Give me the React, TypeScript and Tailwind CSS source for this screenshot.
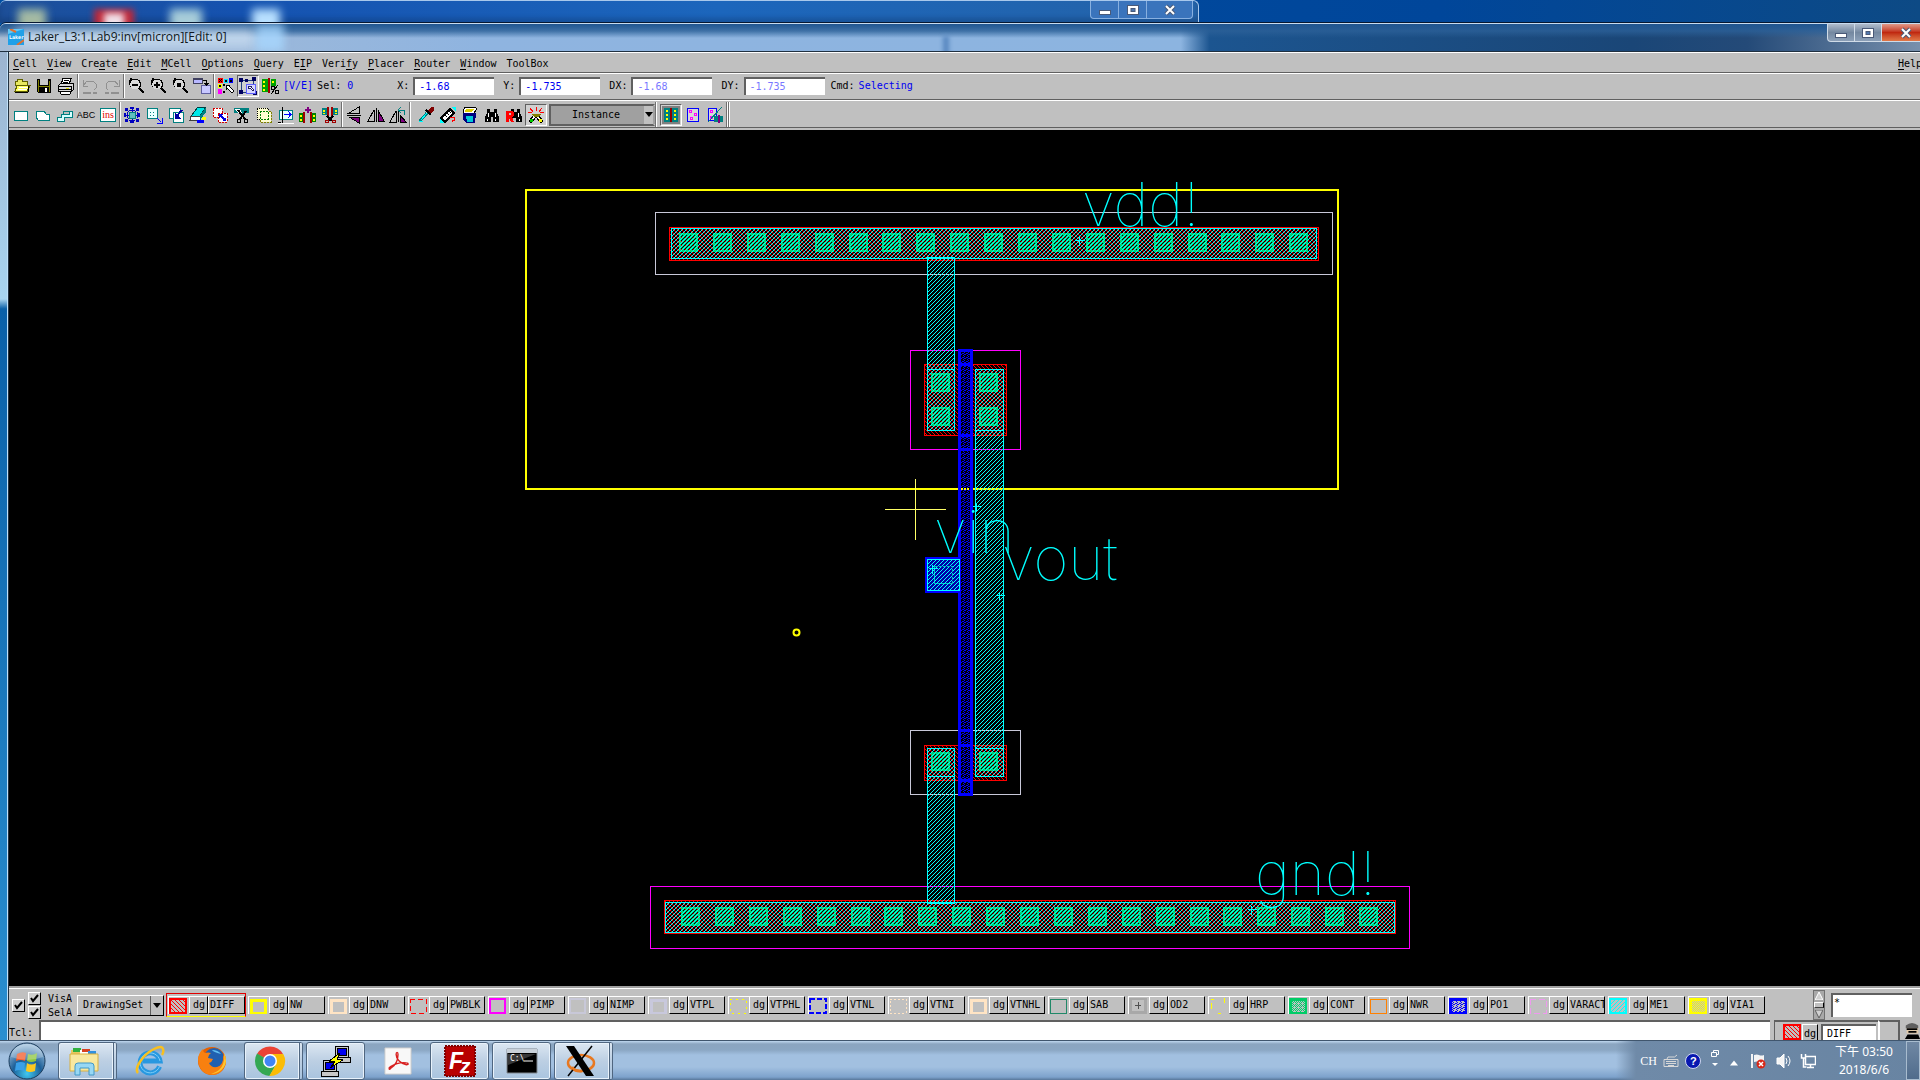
import React from "react";

type Kids = { children?: React.ReactNode };

/* ---------- toolbar icons ---------- */

function Ico({ children }: Kids) {
  return (
    <svg viewBox="0 0 18 18" className="h-[18px] w-[18px] shrink-0" shapeRendering="crispEdges" fill="none" aria-hidden="true">
      {children}
    </svg>
  );
}

function Tool({ label, on, children }: Kids & { label: string; on?: boolean }) {
  return (
    <button
      type="button"
      aria-label={label}
      className={
        on
          ? "flex h-[22px] w-[22px] shrink-0 items-center justify-center border border-t-[#606060] border-l-[#606060] border-r-white border-b-white bg-[#d0d0d0]"
          : "flex h-[22px] w-[22px] shrink-0 items-center justify-center"
      }
    >
      <Ico>{children}</Ico>
    </button>
  );
}

const Sep = () => <span className="h-[25px] w-[2px] shrink-0 border-r border-l border-l-[#707070] border-r-white" />;

const Lens = ({ children }: Kids) => (
  <>
    <path d="M5 2h6v1h2v2h1v5h-1v1h1v1h1v1h1v1h1v2h-2v-1h-1v-1h-1v-1h-1v-1h-1v-1h-6v-1h-2v-2h-1v-5h1v-2h1z" fill="#000" />
    <path d="M5 3h6v1h1v2h1v3h-1v2h-1v1h-6v-1h-1v-2h-1v-3h1v-2h1z" fill="#d8d8d8" />
    {children}
  </>
);

const icons: Record<string, React.ReactNode> = {
  open: (
    <>
      <path d="M2 4h2v-2h5v2h5v4h-12z" fill="#e8e860" stroke="#606000" />
      <path d="M4 8.500h13l-3 6h-12z" fill="#ffff60" stroke="#606000" />
      <path d="M6 10h9M5 12h9" stroke="#fff" />
      <path d="M15.500 9v6M2 15.500h13" stroke="#000" />
    </>
  ),
  save: (
    <>
      <path d="M2 2h14v14h-13l-1-1z" fill="#000" />
      <path d="M3 3h1v12h-1zM14 4h1v11h-1zM4 9h10v1h-10z" fill="#808000" />
      <path d="M5 2h8v6h-8z" fill="#c8c8c8" />
      <path d="M10 11h2v4h-2z" fill="#fff" />
    </>
  ),
  print: (
    <>
      <path d="M6 1.500h8l-2 6h-8z" fill="#fff" stroke="#000" />
      <path d="M7 3.500h5M6 5.500h5" stroke="#000" />
      <path d="M1.500 8.500l2-2h13v6l-2 2h-13z" fill="#d8d8d8" stroke="#000" />
      <path d="M2 9.500h12M2 12.500h12M14.500 9v5" stroke="#000" />
      <path d="M3 14h11l-1 3h-9z" fill="#fff" stroke="#000" />
      <path d="M9 11h3v1h-3z" fill="#e0e000" />
    </>
  ),
  undo: (
    <>
      <path d="M4 9h-2v-6M2 9h5M3 8l3-4h6l3 3v4l-2 2" stroke="#909090" />
      <path d="M2 15.500h8M12 15.500h4" stroke="#909090" strokeWidth="2" />
    </>
  ),
  redo: (
    <>
      <path d="M14 9h2v-6M16 9h-5M15 8l-3-4h-6l-3 3v4l2 2" stroke="#909090" />
      <path d="M16 15.500h-8M6 15.500h-4" stroke="#909090" strokeWidth="2" />
    </>
  ),
  zoomOut: <Lens><path d="M5 7h6v2h-6z" fill="#000" /></Lens>,
  zoomIn: <Lens><path d="M5 7h6v2h-6zM7 5h2v6h-2z" fill="#000" /></Lens>,
  zoomFit: <Lens><path d="M6 6h4v4h-4z" fill="#000" /></Lens>,
  windows: (
    <>
      <path d="M0 1h9v5h-9z" fill="#b8b8ff" stroke="#404060" />
      <path d="M0 1h9v2h-9z" fill="#404060" />
      <path d="M8 8h9v8h-9z" fill="#c8c8ff" stroke="#6060a0" />
      <path d="M10 3h4v3h2l-2.500 3-2.500-3h2v-2h-3z" fill="#000" />
    </>
  ),
  palette: (
    <>
      <path d="M1 1h5v5h-5z" fill="#f00" />
      <path d="M2 2l3 3M5 2l-3 3" stroke="#000" />
      <path d="M7 2h4v4h-4z" fill="#00d8ff" />
      <path d="M12 1h4v5h-4z" fill="#00f" />
      <path d="M1 7h4v4h-4z" fill="#ff0" />
      <path d="M1 12h4v5h-4z" fill="#f0f" />
      <path d="M2 8h2v2h-2zM8 3h2v2h-2zM13 3h2v2h-2zM6 7h2v2h-2zM6 14h2v2h-2z" fill="#000" />
      <path d="M9 8h4l-1 1 5 5-2 2-5-5-1 2z" fill="#fff" stroke="#000" />
    </>
  ),
  select: (
    <>
      <path d="M2 3h12M2 3v12M2 15h5M14 3v4" stroke="#204080" />
      <path d="M0 1h4v4h-4zM13 0h4v4h-4zM0 13h4v4h-4zM14 14h4v4h-4zM6 2h3v3h-3z" fill="#000060" />
      <path d="M7 7h9v9h-9z" stroke="#6060ff" fill="#d8d8ff" />
      <path d="M9 9h4l-1 1 3 3-1 1-3-3-2 1z" fill="#fff" stroke="#202060" />
    </>
  ),
  layerSel: (
    <>
      <path d="M1 2h6v13h-6zM10 2h5v7h-5z" fill="#00a000" />
      <path d="M2 4h2v2h-2zM2 8h2v2h-2zM2 12h2v2h-2zM11 4h2v2h-2z" fill="#ff0" />
      <path d="M7 1h2v15h-2z" fill="#a00000" />
      <path d="M10 9h3v3h-3zM14 13h3v3h-3z" stroke="#000" />
      <path d="M10 17l7-9" stroke="#000" />
    </>
  ),
  rect: <path d="M3 5h13v9h-13z" fill="#fff" stroke="#008080" />,
  poly: <path d="M3 5h8l2 3h3v6h-11l-2-3z" fill="#fff" stroke="#008080" />,
  path: <path d="M8 5h9v6h-8v4h-7v-4h4v-3h8v-3M8 5v3" fill="#d8ffff" stroke="#008080" />,
  move: (
    <>
      <path d="M9 1v16M1 9h16M3 3l12 12M15 3l-12 12M6 4h6M6 14h6M4 6v6M14 6v6" stroke="#0000c0" />
      <path d="M6 6h6v6h-6z" fill="#60c0c0" stroke="#008080" />
      <path d="M7 1h4v2h-4zM7 15h4v2h-4zM1 7h2v4h-2zM15 7h2v4h-2zM2 2h3v3h-3zM13 2h3v3h-3zM2 13h3v3h-3zM13 13h3v3h-3z" fill="#0000c0" />
    </>
  ),
  stretch: (
    <>
      <path d="M2 2h10v10h-10z" fill="#e8ffff" stroke="#008080" />
      <path d="M5 6h1v1h-1zM8 6h1v1h-1zM5 9h1v1h-1zM8 9h1v1h-1z" fill="#008080" />
      <path d="M12 12l4 4M17 12v5h-5" stroke="#00f" />
    </>
  ),
  copy: (
    <>
      <path d="M2 2h11v10h-11z" fill="#fff" stroke="#008080" />
      <path d="M6 6h10v10h-10z" fill="#fff" stroke="#008080" />
      <path d="M15 4l-6 7" stroke="#0000a0" strokeWidth="2" />
      <path d="M8 7v6h6z" fill="#0000a0" />
    </>
  ),
  erase: (
    <>
      <path d="M9 1h8l-6 9h-9z" fill="#00e8e8" stroke="#004040" />
      <path d="M2 10h9v4h-10z" fill="#fff" stroke="#404040" />
      <path d="M17 1v5l-6 8v-4z" fill="#008080" />
      <path d="M8 14h7v3h-7z" fill="#00f" />
      <path d="M13 11h4v3h-4z" fill="#ff0" />
    </>
  ),
  moveBy: (
    <>
      <path d="M2 2h9v9h-9z" fill="#fff" stroke="#d00000" strokeDasharray="2 1" />
      <path d="M7 7h9v9h-9z" fill="#fff" stroke="#d00000" strokeDasharray="2 1" />
      <path d="M9 9l5 5" stroke="#0000e0" strokeWidth="2" />
      <path d="M8 8h4l-4 4zM15 11v4h-4z" fill="#0000e0" />
    </>
  ),
  cut: (
    <>
      <path d="M1 2h15v5h-4l-2 3-4-3h-5z" fill="#008080" />
      <path d="M2 3h5l2 4h-4z" fill="#fff" />
      <path d="M5 4l7 9M13 5l-6 8" stroke="#000" strokeWidth="2" />
      <path d="M4 13h3v3h-3zM11 13h3v3h-3z" stroke="#000" fill="#c0c0c0" />
    </>
  ),
  merge: (
    <>
      <path d="M2 2h11v11h-11z" fill="#ffffd0" stroke="#000" strokeDasharray="1 1" />
      <path d="M5 5h11v11h-11z" fill="#ffffd0" stroke="#808000" strokeDasharray="2 1" />
      <path d="M5 5h8v8h-8z" stroke="#008000" strokeDasharray="2 1" />
    </>
  ),
  align: (
    <>
      <path d="M2 4h13v9h-13z" fill="#e8ffff" stroke="#008080" />
      <path d="M5 1v17M1 16h3" stroke="#000" />
      <path d="M7 8.500h7M11 5l3 3.500-3 3.500" stroke="#00f" />
      <path d="M1 17.500h16" stroke="#fff" />
    </>
  ),
  pair: (
    <>
      <path d="M0 7h6v9h-6zM11 7h6v9h-6z" fill="#008000" />
      <path d="M1 9h2v2h-2zM1 13h2v2h-2zM14 9h2v2h-2zM14 13h2v2h-2z" fill="#ff0" />
      <path d="M4 6h2v11h-2zM11 6h2v11h-2z" fill="#a00000" />
      <path d="M8 1h2v2h2v2h-2v2h-2v-2h-2v-2h2z" fill="#800080" />
    </>
  ),
  split: (
    <>
      <path d="M1 2h6v7h-6zM11 2h6v7h-6z" fill="#008080" />
      <path d="M2 4h2v2h-2zM14 4h2v2h-2zM2 7h2v1h-2zM14 7h2v1h-2z" fill="#ff0" />
      <path d="M6 1h2v9h-2zM10 1h2v9h-2z" fill="#a00000" />
      <path d="M6 10l5 5M12 10l-5 5" stroke="#000" strokeWidth="2" />
      <path d="M4 14h3v2h-3zM11 14h3v2h-3z" stroke="#a00000" />
    </>
  ),
  flipV: (
    <>
      <path d="M14 1v6h-10z" fill="#c0c0c0" stroke="#000" />
      <path d="M2 9h14" stroke="#000" />
      <path d="M14 17v-6h-10z" fill="#800080" stroke="#000" />
    </>
  ),
  flipH: (
    <>
      <path d="M1 15h6v-11z" fill="#c0c0c0" stroke="#000" />
      <path d="M9 2v14" stroke="#000" />
      <path d="M17 15h-6v-11z" fill="#800080" stroke="#000" />
    </>
  ),
  rotate: (
    <>
      <path d="M1 16h6v-11z" fill="#c0c0c0" stroke="#000" />
      <path d="M9 3v13" stroke="#000" />
      <path d="M17 16h-6v-7z" fill="#800080" stroke="#000" />
      <path d="M10 4h5v5M12 1l-3 3 3 3" stroke="#008080" />
    </>
  ),
  dropper: (
    <>
      <path d="M14 1h3v3l-4 5-3-3z" fill="#800000" />
      <path d="M9 4l5 5" stroke="#000" strokeWidth="2" />
      <path d="M10 7l-7 8" stroke="#008080" strokeWidth="3" />
      <path d="M10 7l-6 7" stroke="#0ff" />
      <path d="M2 15h4v1h-4z" fill="#0ff" />
    </>
  ),
  ruler: (
    <>
      <path d="M12 1h5v5zM1 12v5h5z" fill="#0ff" />
      <path d="M2 12l9-9 4 4-9 9z" fill="#fff" stroke="#000" strokeWidth="2" />
      <path d="M6 9l2 2M8 7l2 2M10 5l2 2" stroke="#000" />
      <path d="M11 11h4v3h-2v2" stroke="#f00" />
    </>
  ),
  basket: (
    <>
      <path d="M4 1h10l2 2-4 5h-10v-3z" fill="#fff" stroke="#000" />
      <path d="M5 3h8l-2 3h-7z" fill="#e0d000" />
      <path d="M2 7h13l-1 10h-9l-3-3z" fill="#000080" />
      <path d="M5 10h7v6h-6z" fill="#00c8d8" />
    </>
  ),
  find: (
    <>
      <path d="M4 3h3v3h4v-3h3v4l2 4v5h-6v-5h-2v5h-6v-5l2-4z" fill="#000" />
      <path d="M5 7h1v4h-1zM12 7h1v4h-1zM4 13h1v2h-1zM12 13h1v2h-1z" fill="#fff" />
    </>
  ),
  findNext: (
    <>
      <path d="M6 3h3v3h3v-3h3v4l2 4v5h-6v-4h-5z" fill="#000" />
      <path d="M13 7h1v4h-1zM14 13h1v2h-1z" fill="#fff" />
      <path d="M1 5h6l2 2v3l-2 1 2 5h-3l-2-4v4h-3zM4 7v2h2v-2z" fill="#f00" fillRule="evenodd" />
    </>
  ),
  probe: (
    <>
      <path d="M9 1v4M3 2l3 4M15 2l-3 4M1 6l4 1M17 6l-4 1" stroke="#f00" />
      <path d="M2 15l5-6 2 2-5 6zM16 15l-5-6-2 2 5 6z" fill="#fff" stroke="#000" />
      <path d="M4 8h10l-3 3h-4z" fill="#808000" />
      <path d="M3 13h3v3h-3z" fill="#0c0" />
      <path d="M12 13h3v3h-3z" fill="#ff0" />
    </>
  ),
  viewFull: (
    <>
      <path d="M0 0h18v18h-18z" fill="#808080" />
      <path d="M2 2h14v14h-14z" fill="#008080" />
      <path d="M4 4h2v2h-2zM4 8h2v2h-2zM4 12h2v2h-2zM12 4h2v2h-2zM12 8h2v2h-2zM12 12h2v2h-2z" fill="#ff0" />
      <path d="M8 2h2v14h-2z" fill="#900000" />
    </>
  ),
  viewPins: (
    <>
      <path d="M3.500 2.500h11v13h-11z" fill="#d8d8d8" stroke="#00f" />
      <path d="M5.500 4.500h2v2h-2zM10.500 7.500h2v2h-2zM6.500 11.500h2v2h-2z" stroke="#f0f" />
    </>
  ),
  viewMix: (
    <>
      <path d="M2.500 2.500h8v12h-8z" fill="#d8d8d8" stroke="#00f" />
      <path d="M4.500 4.500h2v2h-2zM4.500 10.500h2v2h-2z" stroke="#f0f" />
      <path d="M8 10h9v6h-9z" fill="#008080" />
      <path d="M12 9h2v8h-2z" fill="#800080" />
      <path d="M16 1l-14 15" stroke="#008080" />
    </>
  ),
};

const menu: [string, number][] = [
  ["Cell", 0], ["View", 0], ["Create", 3], ["Edit", 0], ["MCell", 0], ["Options", 0], ["Query", 0],
  ["EIP", 1], ["Verify", 4], ["Placer", 0], ["Router", 0], ["Window", 0], ["ToolBox", -1],
];

function MenuItem({ text, at }: { text: string; at: number }) {
  if (at < 0) return <button type="button">{text}</button>;
  return (
    <button type="button" className="whitespace-nowrap">
      {text.slice(0, at)}
      <span className="border-b border-black">{text[at]}</span>
      {text.slice(at + 1)}
    </button>
  );
}

function Coord({ name, value, dim }: { name: string; value: string; dim?: boolean }) {
  return (
    <label className="flex items-center gap-1">
      <span>{name}:</span>
      <input
        readOnly
        defaultValue={value}
        className={
          dim
            ? "h-[18px] w-[81px] border-t-2 border-l-2 border-[#606060] bg-white pl-1 text-[#7878ff] outline-none"
            : "h-[18px] w-[81px] border-t-2 border-l-2 border-[#606060] bg-white pl-1 text-[#0000f0] outline-none"
        }
      />
    </label>
  );
}

/* ---------- layer palette ---------- */

const layers: [string, React.ReactNode][] = [
  ["DIFF", <rect x="1" y="1" width="16" height="14" fill="url(#pRed)" stroke="#f00" strokeWidth="2" />],
  ["NW", <rect x="2" y="2" width="14" height="13" stroke="#ff0" strokeWidth="3" />],
  ["DNW", <rect x="2" y="2" width="14" height="13" stroke="#ffe4c4" strokeWidth="3" />],
  ["PWBLK", <rect x="1" y="1" width="16" height="14" stroke="#f00" strokeWidth="1" strokeDasharray="5 3" />],
  ["PIMP", <rect x="1" y="1" width="15" height="14" stroke="#f0f" strokeWidth="2" />],
  ["NIMP", <rect x="1" y="1" width="15" height="14" stroke="#c8c8d8" strokeWidth="2" />],
  ["VTPL", <rect x="2" y="2" width="14" height="13" stroke="#c8c8dc" strokeWidth="3" />],
  ["VTPHL", <rect x="1" y="1" width="16" height="14" stroke="#ff0" strokeWidth="1" strokeDasharray="2 4" />],
  ["VTNL", <rect x="1" y="1" width="16" height="14" stroke="#00f" strokeWidth="2" strokeDasharray="5 2" />],
  ["VTNI", <rect x="1" y="1" width="16" height="14" stroke="#ffe4c4" strokeWidth="1" strokeDasharray="2 2" />],
  ["VTNHL", <rect x="2" y="2" width="14" height="13" stroke="#ffe4c4" strokeWidth="3" />],
  ["SAB", <rect x="1" y="1" width="16" height="14" stroke="#208868" strokeWidth="1" />],
  ["OD2", <><rect width="18" height="16" fill="#a8a8a8" /><rect x="3" y="2" width="12" height="11" fill="#c0c0c0" /><path d="M9 4v7M6 7h6" stroke="#505050" /></>],
  ["HRP", <path d="M2 5v6M2 1h3M15 0v5M9 15h3" stroke="#ff0" />],
  ["CONT", <rect x="1" y="1" width="16" height="14" fill="url(#pGreen)" stroke="#00cc66" strokeWidth="3" />],
  ["NWR", <rect x="1" y="1" width="16" height="14" stroke="#ff8000" strokeWidth="1" />],
  ["PO1", <rect x="1" y="1" width="16" height="14" fill="url(#pBlue)" stroke="#00f" strokeWidth="3" />],
  ["VARACT", <rect x="1" y="1" width="16" height="14" stroke="#ee99ee" strokeWidth="1" strokeDasharray="6 3" />],
  ["ME1", <rect x="1" y="1" width="16" height="14" fill="url(#pCyan)" stroke="#0ff" strokeWidth="2" />],
  ["VIA1", <rect x="1" y="1" width="16" height="14" fill="url(#pYellow)" stroke="#ff0" strokeWidth="3" />],
];

function Swatch({ children }: Kids) {
  return (
    <svg className="h-4 w-[18px] shrink-0" viewBox="0 0 18 16" fill="none" shapeRendering="crispEdges" aria-hidden="true">
      {children}
    </svg>
  );
}

const raised = "border border-t-white border-l-white border-b-black border-r-black";

function Layer({ name, art, on }: { name: string; art: React.ReactNode; on?: boolean }) {
  return (
    <div
      className={
        on
          ? "flex h-6 w-20 shrink-0 items-center border border-[#e00000] border-b-[#ff0] pl-px"
          : "flex h-6 w-20 shrink-0 items-center pl-[2px]"
      }
    >
      <button type="button" aria-label={name + " swatch"} className="flex h-[18px] w-[21px] shrink-0 items-center border-t border-l border-white">
        <Swatch>{art}</Swatch>
      </button>
      <button type="button" className={"flex h-[18px] w-[19px] shrink-0 items-center pl-[3px] " + raised}>dg</button>
      <button type="button" className={"flex h-[18px] w-[37px] shrink-0 items-center overflow-hidden pl-px " + raised}>{name}</button>
    </div>
  );
}

function Tick({ label }: { label: string }) {
  return (
    <span className="relative flex h-[13px] w-[13px]">
      <input
        type="checkbox"
        defaultChecked
        aria-label={label}
        className="h-[13px] w-[13px] shrink-0 appearance-none border border-t-white border-l-white border-r-black border-b-black bg-[#d0d0d0]"
      />
      <svg viewBox="0 0 13 13" className="pointer-events-none absolute inset-0" fill="none" stroke="#000" strokeWidth="2" aria-hidden="true">
        <path d="M3 6l2 3 5-6" />
      </svg>
    </span>
  );
}

/* ---------- layout drawing ---------- */

function Contact({ x, y }: { x: number; y: number }) {
  return <rect x={x + 1} y={y + 1} width={17} height={17} fill="url(#pGreen)" stroke="#00d070" strokeWidth={2} />;
}

const Cross = ({ x, y }: { x: number; y: number }) => (
  <path d={`M${x - 4} ${y}h9M${x} ${y - 4}v9`} stroke="#0ff" />
);

function Drawing() {
  const metal = { fill: "url(#pCyan)", stroke: "#0ff" };
  const label = 'fill-[#00ffff] text-[60px] font-thin [font-family:"Inter","DejaVu_Sans",sans-serif]';
  return (
    <svg className="absolute inset-0 h-full w-full" fill="none" shapeRendering="crispEdges" role="img" aria-label="Inverter layout">
      <defs>
        <pattern id="pCyan" width="4" height="4" patternUnits="userSpaceOnUse">
          <path d="M0 3h1v1h-1zM1 2h1v1h-1zM2 1h1v1h-1zM3 0h1v1h-1z" fill="#0ff" />
        </pattern>
        <pattern id="pRed" width="4" height="4" patternUnits="userSpaceOnUse">
          <path d="M0 0h1v1h-1zM1 1h1v1h-1zM2 2h1v1h-1zM3 3h1v1h-1z" fill="#f00" />
        </pattern>
        <pattern id="pGreen" width="4" height="4" patternUnits="userSpaceOnUse">
          <path d="M0 0h1v1h-1zM1 3h1v1h-1zM2 2h1v1h-1zM3 1h1v1h-1zM0 2h1v1h-1zM2 0h1v1h-1zM3 3h1v1h-1z" fill="#00d070" />
        </pattern>
        <pattern id="pBlue" width="4" height="4" patternUnits="userSpaceOnUse">
          <path d="M0 0h1v1h-1zM2 1h1v1h-1zM1 2h1v1h-1zM3 3h1v1h-1zM0 2h1v1h-1zM3 1h1v1h-1z" fill="#00f" />
        </pattern>
        <pattern id="pYellow" width="2" height="2" patternUnits="userSpaceOnUse">
          <path d="M0 0h1v1h-1zM1 1h1v1h-1z" fill="#ff0" />
        </pattern>
      </defs>
      <g transform="translate(-9 -130)">
        <rect x="655.5" y="212.5" width="677" height="62" stroke="#c8c8d8" />
        <rect x="669.5" y="227.5" width="649" height="33" fill="url(#pRed)" stroke="#f00" />
        <rect x="650.5" y="886.5" width="759" height="62" stroke="#f0f" />
        <rect x="664.5" y="900.5" width="731" height="33" fill="url(#pRed)" stroke="#f00" />
        <rect x="910.5" y="350.5" width="110" height="99" stroke="#f0f" />
        <rect x="910.5" y="730.5" width="110" height="64" stroke="#c8c8d8" />
        <rect x="924.5" y="364.5" width="82" height="71" fill="url(#pRed)" stroke="#f00" />
        <rect x="924.5" y="745.5" width="82" height="35" fill="url(#pRed)" stroke="#f00" />
        {Array.from({ length: 19 }, (_, i) => <Contact key={i} x={Math.round(679 + i * 33.9)} y={233} />)}
        {Array.from({ length: 21 }, (_, i) => <Contact key={i} x={Math.round(681 + i * 33.9)} y={907} />)}
        <Contact x={931} y={373} />
        <Contact x={931} y={407} />
        <Contact x={979} y={373} />
        <Contact x={979} y={407} />
        <Contact x={931} y={752} />
        <Contact x={979} y={752} />
        <rect x="526" y="190" width="812" height="299" stroke="#ff0" strokeWidth="2" />
        <rect x="671.5" y="228.5" width="645" height="30" {...metal} />
        <rect x="665.500" y="902.5" width="729" height="30" {...metal} />
        <rect x="927.5" y="257.5" width="27" height="173" {...metal} />
        <path d="M927 369.5h28M975 430.500h29M975 748.500h29M927 776.500h28" stroke="#0ff" />
        <rect x="975.5" y="369.5" width="28" height="407" {...metal} />
        <rect x="927.5" y="748.5" width="27" height="155" {...metal} />
        <rect x="958" y="349" width="15" height="447" fill="#000" />
        <rect x="959.5" y="350.5" width="12" height="444" fill="url(#pBlue)" stroke="#00f" strokeWidth="3" />
        <path d="M958 364.500h15M958 435.500h15M958 449.500h15M958 730.500h15M958 745.500h15M958 780.500h15" stroke="#00f" strokeWidth="3" />
        <path d="M961 489h9" stroke="#ff0" strokeWidth="2" strokeDasharray="2 1" />
        <rect x="926" y="558" width="34" height="34" fill="#0000a8" stroke="#00f" strokeWidth="2" />
        <rect x="927.5" y="559.5" width="32" height="31" fill="url(#pCyan)" stroke="#0ff" />
        <rect x="934.5" y="566.5" width="18" height="17" stroke="#00c0c0" strokeDasharray="3 1" />
        <path d="M885 509.5h61M915.5 479v61" stroke="#ff6" />
        <circle cx="796.5" cy="632.5" r="3" stroke="#ff0" strokeWidth="2" shapeRendering="geometricPrecision" />
        <Cross x={1079.5} y={240.5} />
        <Cross x={1251.5} y={909.5} />
        <Cross x={976.5} y={506.5} />
        <Cross x={932.5} y={568.5} />
        <Cross x={999.5} y={595.5} />
        <text x="1082" y="226" className={label}>vdd!</text>
        <text x="934" y="553" className={label}>vin</text>
        <text x="1002" y="580" className={label}>vout</text>
        <text x="1255" y="895" className={label}>gnd!</text>
      </g>
    </svg>
  );
}

/* ---------- window controls ---------- */

function Glyph({ kind }: { kind: "min" | "max" | "close" }) {
  return (
    <svg viewBox="0 0 14 12" className="h-3 w-3.5" fill="none" aria-hidden="true">
      {kind === "min" && <rect x="1.5" y="6.500" width="11" height="4" fill="#fff" stroke="#4a5a78" />}
      {kind === "max" && (
        <>
          <rect x="1.500" y="1.500" width="11" height="9" fill="#fff" stroke="#4a5a78" />
          <rect x="5" y="4.500" width="4" height="3" fill="#5078b0" stroke="#4a5a78" />
        </>
      )}
      {kind === "close" && (
        <>
          <path d="M3 2l8 8M11 2l-8 8" stroke="#4a5a78" strokeWidth="4" />
          <path d="M3 2l8 8M11 2l-8 8" stroke="#fff" strokeWidth="2" />
        </>
      )}
    </svg>
  );
}

/* ---------- taskbar ---------- */

function Task({ label, open, stack, children }: Kids & { label: string; open?: boolean; stack?: boolean }) {
  const base = "flex h-[38px] shrink-0 items-center justify-center ";
  const face = open
    ? "w-[59px] rounded-[3px] border border-[#4f6680] bg-gradient-to-b from-[#dce7f2] via-[#bccfe3] to-[#a9c4df] shadow-[inset_0_0_0_1px_#e8f2fb] "
    : "w-[59px] ";
  return (
    <button type="button" aria-label={label} className={base + face + (stack ? "border-r-4 border-double pr-1" : "")}>
      {children}
    </button>
  );
}

const t32 = "h-8 w-8";

function Orb() {
  return (
    <svg viewBox="0 0 38 38" className="h-[38px] w-[38px]" aria-hidden="true">
      <defs>
        <radialGradient id="orb" cx="50%" cy="85%" r="80%">
          <stop offset="0" stopColor="#40c8f0" />
          <stop offset=".5" stopColor="#1c5f98" />
          <stop offset="1" stopColor="#9fc0dc" />
        </radialGradient>
      </defs>
      <circle cx="19" cy="19" r="18" fill="url(#orb)" stroke="#1c3c5c" />
      <path d="M9 12q5-3 9-1l-1 8q-5-2-9 0z" fill="#f05a28" />
      <path d="M20 12q5 2 9-1l-1 8q-5 2-9 0z" fill="#8cc63e" />
      <path d="M8 21q5-2 9 0l-1 8q-5-2-9 0z" fill="#3aa0e8" />
      <path d="M19 21q4 3 9 0l-1 8q-5 2-9 0z" fill="#fcc820" />
      <path d="M3 15a16 13 0 0132 0q-16 6-32 0z" fill="#fff" opacity=".25" />
    </svg>
  );
}

export default function App() {
  return (
    <div className='flex h-screen flex-col overflow-hidden bg-gradient-to-b from-[#0050a5] via-[#2a8fd0] to-[#2a8fd0] text-[10px] leading-3 text-black select-none [font-family:"DejaVu_Sans_Mono","Liberation_Mono",monospace]'>
      {/* window behind */}
      <div className="flex h-[23px] shrink-0 bg-[linear-gradient(90deg,#0050a5,#00469a_75%,#0d4a85)]">
        <div className="relative flex w-[1199px] items-start justify-end overflow-hidden rounded-t-md border-t border-r border-[#a8c8ec] bg-[linear-gradient(90deg,#1d4f98,#1552b0_20%,#1c66bc_60%,#2463a8)] pr-[5px] shadow-[inset_0_-5px_5px_#0b2f6055]">
          <div className="absolute top-2 left-[18px] h-6 w-7 bg-[#c8d8a8] opacity-80 blur-[4px]" />
          <div className="absolute top-2 left-[94px] h-6 w-10 bg-[#c02838] blur-[3px]" />
          <div className="absolute top-3 left-[104px] h-5 w-5 bg-[#f0e0e8] blur-[3px]" />
          <div className="absolute top-2 left-[170px] h-6 w-8 bg-[#b8dce0] opacity-90 blur-[4px]" />
          <div className="absolute top-2 left-[252px] h-6 w-7 bg-[#b8e0ff] blur-[4px]" />
          <div className="flex h-[18px] rounded-b border border-t-0 border-[#88b0e0] bg-[#3a74bc]">
            <button type="button" aria-label="Minimize back window" className="flex w-7 items-center justify-center border-r border-[#88b0e0]"><Glyph kind="min" /></button>
            <button type="button" aria-label="Maximize back window" className="flex w-7 items-center justify-center border-r border-[#88b0e0]"><Glyph kind="max" /></button>
            <button type="button" aria-label="Close back window" className="flex w-[45px] items-center justify-center"><Glyph kind="close" /></button>
          </div>
        </div>
      </div>

      {/* editor window */}
      <div className="flex min-h-0 flex-1 flex-col rounded-tl-md">
        <header className="relative flex h-[29px] shrink-0 items-start justify-between overflow-hidden rounded-tl-md border-t border-b border-t-[#c8dcf0] border-b-[#203040] bg-[linear-gradient(90deg,#a8bcd4,#8fb4e0_25%,#8cb4e0_61.5%,#1c5590_63%,#1a4677_85%,#244a78_91%,#7890ac)] shadow-[0_-1px_0_#081830]">
          <div className="absolute inset-x-0 top-0 h-3.5 bg-gradient-to-b from-[#1f5590] via-[#2b6098]/80 to-transparent" />
          <div className="absolute top-1 left-4 h-5 w-60 bg-[#c8dcf0] opacity-80 blur-[6px]" />
          <div className="absolute top-0 left-[256px] h-7 w-7 bg-[#a8d8ff] opacity-80 blur-[4px]" />
          <div className="absolute top-3 left-[943px] h-5 w-1.5 bg-[#5888c0] blur-[2px]" />
          <div className="relative flex items-center gap-1 pt-[5px] pl-2">
            <svg viewBox="0 0 16 16" className="h-4 w-4" aria-hidden="true">
              <rect width="16" height="16" fill="#20a0e8" />
              <path d="M0 0h16L0 5z" fill="#60c8f8" />
              <path d="M2 0l6 3M9 16l7-5" stroke="#e07030" strokeWidth="2" />
              <text x="1" y="10" fontSize="5" fontWeight="bold" fill="#fff">Laker</text>
            </svg>
            <h1 className='text-[12px] leading-4 whitespace-nowrap text-[#101820] [font-family:"Open_Sans","Noto_Sans",sans-serif]'>Laker_L3:1.Lab9:inv[micron][Edit: 0]</h1>
          </div>
          <div className="relative -mr-2.5 flex h-[18px] rounded-bl border border-t-0 border-[#d0dce8] bg-gradient-to-b from-[#b0bccc] via-[#7488a0] to-[#8ca0b8]">
            <button type="button" aria-label="Minimize" className="flex w-[27px] items-center justify-center border-r border-[#d0dce8]"><Glyph kind="min" /></button>
            <button type="button" aria-label="Maximize" className="flex w-[27px] items-center justify-center border-r border-[#d0dce8]"><Glyph kind="max" /></button>
            <button type="button" aria-label="Close" className="flex w-[47px] items-center justify-center bg-gradient-to-b from-[#e09888] via-[#c02810] to-[#e07848]"><Glyph kind="close" /></button>
          </div>
        </header>

        <div className="flex min-h-0 flex-1">
          <div className="w-[7px] shrink-0 bg-[linear-gradient(180deg,#9cb4d0,#a8d4f0_25%,#0a60a8_26%,#2a8fd0)]" />
          <div className="w-px shrink-0 bg-[#c0e0f8]" />
          <div className="w-px shrink-0 bg-[#203040]" />
          <div className="flex min-w-0 flex-1 flex-col bg-[#c0c0c0]">
            <nav className="flex h-[21px] shrink-0 items-center justify-between overflow-hidden border-t border-b border-t-white border-b-[#606060] pt-0.5 pl-1">
              <div className="flex gap-2.5">
                {menu.map(([t, a]) => <MenuItem key={t} text={t} at={a} />)}
              </div>
              <div className="-mr-0.5"><MenuItem text="Help" at={0} /></div>
            </nav>

            <div className="flex h-[27px] shrink-0 items-center overflow-hidden border-t border-b border-t-white border-b-[#606060] pb-0.5 pl-0.5 whitespace-nowrap">
              <Tool label="Open">{icons.open}</Tool>
              <Tool label="Save">{icons.save}</Tool>
              <Tool label="Print">{icons.print}</Tool>
              <Sep />
              <Tool label="Undo">{icons.undo}</Tool>
              <Tool label="Redo">{icons.redo}</Tool>
              <Sep />
              <Tool label="Zoom out">{icons.zoomOut}</Tool>
              <Tool label="Zoom in">{icons.zoomIn}</Tool>
              <Tool label="Zoom fit">{icons.zoomFit}</Tool>
              <Tool label="Arrange windows">{icons.windows}</Tool>
              <Sep />
              <Tool label="Layer selection">{icons.palette}</Tool>
              <Tool label="Area select" on>{icons.select}</Tool>
              <Tool label="Selectable objects">{icons.layerSel}</Tool>
              <span className="ml-0.5 text-[#0000f0]">[V/E]</span>
              <span className="ml-1">Sel:</span>
              <span className="ml-1.5 text-[#0000f0]">0</span>
              <div className="ml-11 flex gap-[9px]">
                <Coord name="X" value="-1.68" />
                <Coord name="Y" value="-1.735" />
                <Coord name="DX" value="-1.68" dim />
                <Coord name="DY" value="-1.735" dim />
              </div>
              <span className="ml-1.5">Cmd:</span>
              <span className="ml-1 text-[#0000f0]">Selecting</span>
            </div>

            <div className="flex h-[28px] shrink-0 items-center overflow-hidden border-t border-b border-t-white border-b-[#606060] pt-px">
              <Tool label="Rectangle">{icons.rect}</Tool>
              <Tool label="Polygon">{icons.poly}</Tool>
              <Tool label="Path">{icons.path}</Tool>
              <button type="button" className='w-[22px] shrink-0 text-center text-[9px] [font-family:"Liberation_Sans",sans-serif]'>ABC</button>
              <button type="button" className="flex w-[22px] shrink-0 justify-center">
                <span className='h-[14px] w-4 border border-[#008080] bg-white text-[10px] text-[#e00000] [font-family:"Liberation_Serif",serif]'>ins</span>
              </button>
              <Sep />
              {["move", "stretch", "copy", "erase", "moveBy", "cut", "merge", "align", "pair", "split"].map((k) => (
                <Tool key={k} label={k}>{icons[k]}</Tool>
              ))}
              <Sep />
              {["flipV", "flipH", "rotate"].map((k) => <Tool key={k} label={k}>{icons[k]}</Tool>)}
              <Sep />
              <span className="w-1" />
              {["dropper", "ruler", "basket", "find", "findNext"].map((k) => <Tool key={k} label={k}>{icons[k]}</Tool>)}
              <Tool label="Probe" on>{icons.probe}</Tool>
              <label className="relative ml-0.5 flex items-center">
                <select aria-label="View level" className="h-[22px] w-[106px] appearance-none border-2 border-y-[#606060] border-r-transparent border-l-[#606060] bg-[linear-gradient(90deg,#a0a0a0_93px,#c0c0c0_93px)] pr-3 [text-align-last:center] outline-none">
                  <option>Instance</option>
                </select>
                <svg viewBox="0 0 8 5" className="pointer-events-none absolute right-0.5 h-[5px] w-2" aria-hidden="true"><path d="M0 0h8L4 5z" /></svg>
              </label>
              <Sep />
              <span className="w-[3px]" />
              <Tool label="Full view" on>{icons.viewFull}</Tool>
              <Tool label="Pin view">{icons.viewPins}</Tool>
              <Tool label="Mixed view">{icons.viewMix}</Tool>
              <Sep />
              <Sep />
            </div>
            <div className="h-0.5 shrink-0" />

            <main className="relative min-h-0 flex-1 overflow-hidden bg-black">
              <Drawing />
            </main>

            {/* layer bar */}
            <div className="flex h-[34px] shrink-0 items-center overflow-hidden border-t-2 border-[#a0a0a0] pt-0.5 shadow-[inset_0_1px_0_#fff]">
              <div className="ml-[3px]"><Tick label="All layers" /></div>
              <div className="ml-[3px] flex flex-col gap-px">
                <Tick label="Visible all" />
                <Tick label="Selectable all" />
              </div>
              <div className="ml-[7px] flex flex-col gap-1">
                <span className="h-2.5 overflow-hidden">VisA</span>
                <span className="h-2.5 overflow-hidden">SelA</span>
              </div>
              <label className="relative ml-[5px] flex items-center">
                <select aria-label="Layer set" className={"h-[21px] w-[87px] appearance-none pl-[5px] outline-none " + raised}>
                  <option>DrawingSet</option>
                </select>
                <span className="pointer-events-none absolute right-[13px] h-[19px] w-px bg-[#606060]" />
                <svg viewBox="0 0 8 5" className="pointer-events-none absolute right-[3px] h-[5px] w-2" aria-hidden="true"><path d="M0 0h8L4 5z" /></svg>
              </label>
              <div className="ml-0.5 flex">
                {layers.map(([n, a], i) => <Layer key={n} name={n} art={a} on={i === 0} />)}
              </div>
              <div className="ml-auto flex h-[30px] w-3 shrink-0 flex-col items-center justify-between border border-[#707070] bg-[#a8a8a8] py-px">
                <svg viewBox="0 0 8 8" className="h-2 w-2" aria-hidden="true"><path d="M0 8l4-8 4 8z" fill="#d0d0d0" stroke="#fff" /></svg>
                <span className="h-1.5 w-2.5 border border-t-white border-l-white border-b-[#404040] bg-[#c0c0c0]" />
                <svg viewBox="0 0 8 8" className="h-2 w-2" aria-hidden="true"><path d="M0 0l4 8 4-8z" fill="#d0d0d0" stroke="#606060" /></svg>
              </div>
              <input aria-label="Layer filter" readOnly defaultValue="*" className="mr-2 ml-1.5 h-6 w-[81px] shrink-0 border-t-2 border-l-2 border-[#606060] bg-white pb-2 pl-px outline-none" />
            </div>

            {/* command line */}
            <div className="flex h-[20px] shrink-0 overflow-hidden">
              <label className="flex min-w-0 flex-1">
                <span className="w-[30px] pt-[7px]">Tcl:</span>
                <input aria-label="Tcl command" className="min-w-0 flex-1 border-t-2 border-l-2 border-[#606060] bg-white pl-1 outline-none" />
              </label>
              <div className="ml-1 flex h-6 w-[104px] items-start border-t-2 border-l border-[#606060] pt-0.5 pl-2">
                <Swatch><rect x="1" y="1" width="16" height="14" fill="url(#pRed)" stroke="#f00" strokeWidth="2" /></Swatch>
                <button type="button" aria-label="Layer purpose" className={"ml-px h-5 w-4 " + raised}>dg</button>
                <input aria-label="Current layer" readOnly defaultValue="DIFF" className="ml-[3px] h-5 w-[55px] border-t-2 border-l-2 border-[#606060] bg-white pb-1 pl-1 outline-none" />
              </div>
              <div className="flex w-[42px]">
                <div className="h-6 w-[22px] border-t-2 border-r-2 border-l-2 border-[#606060] border-l-white" />
                <svg viewBox="0 0 18 20" className="ml-1 h-5 w-4" aria-hidden="true">
                  <path d="M2 5q7-6 14 0v3H2z" fill="#606060" />
                  <path d="M3 8h13v6H3z" fill="#e0c8a8" />
                  <path d="M3 9h12M5 12h9" stroke="#000" strokeWidth="2" />
                  <path d="M1 20l3-5h12l2 5z" fill="#000" />
                </svg>
              </div>
            </div>
          </div>
        </div>
      </div>

      {/* taskbar */}
      <footer className="flex h-10 shrink-0 items-center border-t border-[#40566e] bg-[linear-gradient(180deg,#c0d8f0_0,#8ba5c0_3px,#8ba7c4_9px,#a2c0e0_14px,#a2c0e0_26px,#7da2cc_36px,#58779a_39px)]">
        <button type="button" aria-label="Start" className="ml-2"><Orb /></button>
        <div className="ml-3 flex gap-[3px]">
          <Task label="Explorer" open stack>
            <svg viewBox="0 0 32 32" className={t32} aria-hidden="true">
              <path d="M3 5h8l2 3h15v17H3z" fill="#e8c860" />
              <path d="M5 3h8v4H5z" fill="#30b040" /><path d="M12 5h8v4h-8z" fill="#fff" /><path d="M14 4h8v3h-8z" fill="#d84020" /><path d="M20 6h8v3h-8z" fill="#3090e0" />
              <path d="M2 9h28v17H2z" fill="#f8e8a0" stroke="#d8b040" />
              <path d="M7 30V21q0-3 3-3h13q3 0 3 3v9h-5v-7h-9v7z" fill="#98d8f4" stroke="#4098c8" />
            </svg>
          </Task>
          <Task label="Internet Explorer">
            <svg viewBox="0 0 32 32" className={t32} fill="none" aria-hidden="true">
              <path d="M25.500 21.500A10 10 0 1126 16H9" stroke="#2898e0" strokeWidth="5" />
              <path d="M25.500 21.500A10 10 0 1126 16" stroke="#80d0f8" strokeWidth="1" />
              <path d="M4 28C0 24 8 10 20 4q8-4 9 0 1 3-1 6" stroke="#f8c020" strokeWidth="2.500" />
            </svg>
          </Task>
          <Task label="Firefox">
            <svg viewBox="0 0 32 32" className={t32} aria-hidden="true">
              <circle cx="16" cy="16" r="14" fill="#e66000" />
              <circle cx="18" cy="13" r="10" fill="#2060b0" />
              <path d="M16 5q6 0 9 4-8-2-9-4z" fill="#60c0f0" />
              <path d="M2 14Q3 7 7 4q0 3 2 4 3-1 6 0-3 2-3 5l5 1q-1 3-4 4 2 5 8 4 7-2 6-12 4 6 2 11-4 9-13 9Q3 29 2 14z" fill="#f88010" />
              <path d="M28 8q4 8 0 14-5 7-13 7 10-3 12-10 2-5 1-11z" fill="#fcc830" />
            </svg>
          </Task>
          <Task label="Chrome" open stack>
            <svg viewBox="0 0 32 32" className={t32} aria-hidden="true">
              <path d="M16 16L3 9a15 15 0 0126 0z" fill="#ea4335" />
              <path d="M16 16L3 8.500a15 15 0 0012.500 22.500l7-12z" fill="#34a853" />
              <path d="M16 9h13.300a15 15 0 01-14 22l7-12z" fill="#fbbc05" />
              <circle cx="16" cy="16" r="7" fill="#fff" /><circle cx="16" cy="16" r="5.500" fill="#4285f4" />
            </svg>
          </Task>
          <Task label="PuTTY" open>
            <svg viewBox="0 0 32 32" className={t32} shapeRendering="crispEdges" aria-hidden="true">
              <path d="M15 1h13v11H15zM13 12h17v5H13zM3 15h13v11H3zM1 26h17v5H1z" fill="#c8c8c8" stroke="#000" />
              <path d="M17 3h9v7h-9zM5 17h9v7H5z" fill="#0000f0" stroke="#000" />
              <path d="M20 8L9 16l6 1-5 6 13-8-6-1z" fill="#ff0" stroke="#000" />
            </svg>
          </Task>
          <Task label="Acrobat">
            <svg viewBox="0 0 30 30" className="h-7 w-7" aria-hidden="true">
              <path d="M1 1h28v28H1z" fill="#f8f8f8" stroke="#c8c8c8" />
              <path d="M7 23c5-3 8-9 8-15 0-3-2-3-2 0 0 5 5 10 11 11 3 0 2-2 0-2-6-1-12 1-17 4-3 2-1 4 0 2z" fill="none" stroke="#d82020" strokeWidth="1.500" />
            </svg>
          </Task>
          <Task label="FileZilla" open>
            <svg viewBox="0 0 32 32" className={t32} aria-hidden="true">
              <rect x="1" y="1" width="30" height="30" fill="#b80000" stroke="#800000" strokeDasharray="2 1" strokeWidth="2" />
              <text x="5" y="24" fontSize="23" fontWeight="bold" fontStyle="italic" fill="#fff" fontFamily="Liberation Sans">F</text>
              <text x="16" y="28" fontSize="21" fontWeight="bold" fontStyle="italic" fill="#fff" fontFamily="Liberation Sans">z</text>
            </svg>
          </Task>
          <Task label="Command prompt" open>
            <svg viewBox="0 0 32 32" className={t32} aria-hidden="true">
              <path d="M1 4h30v24H1z" fill="#000" stroke="#808890" />
              <path d="M1 4h30v4H1z" fill="#c8d0d8" />
              <path d="M2 9h28L2 20z" fill="#383838" />
              <text x="4" y="16" fontSize="8" fill="#fff">C:\</text>
              <path d="M18 16h9" stroke="#fff" />
            </svg>
          </Task>
          <Task label="X server" open stack>
            <svg viewBox="0 0 32 32" className={t32} fill="none" aria-hidden="true">
              <ellipse cx="17" cy="18" rx="13" ry="8" stroke="#e87820" strokeWidth="2.500" />
              <path d="M2 1h8l20 30h-8z" fill="#000" />
              <path d="M28 1L4 31" stroke="#000" strokeWidth="1.500" />
              <path d="M8 22q3 5 10 4" stroke="#e87820" strokeWidth="2.500" />
            </svg>
          </Task>
        </div>

        <div className="ml-auto flex h-full items-center bg-[linear-gradient(90deg,transparent,#6f8aa8_20px,#6884a2)] pl-6 text-white">
          <span className='text-[12px] [font-family:"Liberation_Serif",serif]'>CH</span>
          <svg viewBox="0 0 16 14" className="ml-1.5 h-3.5 w-4" fill="none" stroke="#d8d8d8" aria-hidden="true">
            <path d="M1 5.500h14v7H1zM3 7.500h10M3 9.500h10M5 11.500h6M4 5q0-3 4-2t6-2" />
          </svg>
          <svg viewBox="0 0 16 16" className="ml-1.5 h-4 w-4" aria-hidden="true">
            <circle cx="8" cy="8" r="7.500" fill="#0818b0" stroke="#d0d8f0" />
            <text x="5" y="12" fontSize="11" fontWeight="bold" fill="#fff" fontFamily="Liberation Sans">?</text>
          </svg>
          <svg viewBox="0 0 10 18" className="mb-1.5 ml-[9px] h-[18px] w-2.5" fill="none" stroke="#fff" aria-hidden="true">
            <path d="M3.500 3V1.500h5v4H7M1.500 3.500h5v4h-5z" /><path d="M2 14h6l-3 3z" fill="#fff" stroke="none" />
          </svg>
          <svg viewBox="0 0 10 6" className="mt-1 ml-2.5 h-1.5 w-2" aria-hidden="true"><path d="M0 6l5-6 5 6z" fill="#fff" /></svg>
          <svg viewBox="0 0 16 16" className="ml-3 h-4 w-4" aria-hidden="true">
            <path d="M1 1h2v14H1zM4 2q3-1 5 0t5 0v7q-3 1-5 0t-5 0z" fill="#f4f4f4" />
            <circle cx="11" cy="11" r="4.500" fill="#d82818" /><path d="M9 9l4 4M13 9l-4 4" stroke="#fff" strokeWidth="1.500" />
          </svg>
          <svg viewBox="0 0 16 16" className="ml-2.5 h-4 w-4" fill="none" stroke="#fff" aria-hidden="true">
            <path d="M1 5h3l4-4v14l-4-4H1z" fill="#f4f4f4" /><path d="M10 5q2 3 0 6M12 3q4 5 0 10" />
          </svg>
          <svg viewBox="0 0 16 16" className="ml-2 h-4 w-4" fill="none" stroke="#fff" aria-hidden="true">
            <path d="M5.500 3.500h10v8h-10zM7 14.500h7M10.500 12v2M1.500 1v4h4V1M3.500 5v9h3" strokeWidth="1.500" />
          </svg>
          <div className='ml-2 w-[80px] text-center text-[12px] leading-[18px] whitespace-nowrap [font-family:"Noto_Sans","Noto_Sans_CJK_TC",sans-serif]'>
            <div>下午 03:50</div>
            <div>2018/6/6</div>
          </div>
          <button type="button" aria-label="Show desktop" className="ml-0.5 h-full w-[14px] border border-[#a8bccf] bg-gradient-to-b from-[#7088a4] to-[#506c8c]" />
        </div>
      </footer>
    </div>
  );
}
